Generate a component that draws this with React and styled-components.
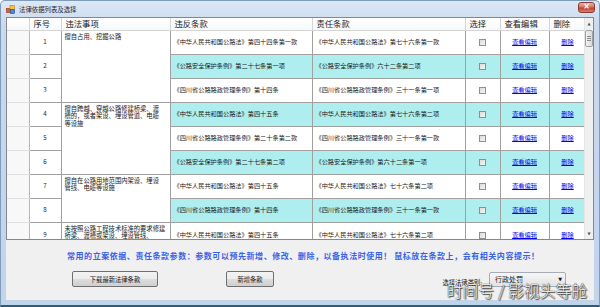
import React from "react";
import styled, { createGlobalStyle, css } from "styled-components";

const GlobalStyle = createGlobalStyle`
  html, body {
    margin: 0;
    padding: 0;
    width: 600px;
    height: 307px;
    overflow: hidden;
    background: #ffffff;
  }
  * { box-sizing: border-box; }
`;

const cjk = `"Noto Sans CJK SC", "Noto Sans", sans-serif`;

const Window = styled.div`
  width: 600px;
  height: 307px;
  display: flex;
  flex-direction: column;
  padding: 0 5px 5px 5px;
  background: linear-gradient(180deg, #dde8f5 0%, #c9d9ee 8%, #c2d4ea 100%);
  border: 1px solid #7f9db9;
  border-bottom: 2px solid #2b5d78;
  border-radius: 5px 5px 0 0;
  font-family: ${cjk};
`;

const TitleBar = styled.div`
  height: 16px;
  display: flex;
  align-items: center;
  gap: 4px;
`;

const TitleText = styled.span`
  font-size: 6.4px;
  color: #1e2a3a;
  flex: 1;
`;

const CloseButton = styled.div`
  width: 17px;
  height: 11px;
  margin-right: -1px;
  margin-top: -4px;
  border: 1px solid #8a3c34;
  border-radius: 3px;
  background: linear-gradient(180deg, #eab1a6 0%, #d87564 45%, #c2402f 55%, #d7806c 100%);
  color: #ffffff;
  font-size: 8px;
  font-weight: bold;
  font-family: "DejaVu Sans", sans-serif;
  display: flex;
  align-items: center;
  justify-content: center;
  line-height: 1;
`;

const Client = styled.div`
  flex: 1;
  display: flex;
  flex-direction: column;
  background: #f0f0f0;
`;

const GridBox = styled.div`
  height: 223px;
  display: flex;
  border: 1px solid #828790;
  background: #ffffff;
  overflow: hidden;
`;

const Viewport = styled.div`
  flex: 1;
  overflow: hidden;
`;

const Table = styled.table`
  table-layout: fixed;
  border-collapse: collapse;
  width: 579px;
  font-family: ${cjk};
  color: #1a1a1a;
`;

const HeadCell = styled.th`
  height: 12px;
  padding: 0 0 0 4px;
  font-size: 8.3px;
  font-weight: normal;
  text-align: left;
  line-height: 11px;
  white-space: nowrap;
  overflow: hidden;
  background: linear-gradient(180deg, #ffffff 0%, #f7f8fa 100%);
  border-right: 1px solid #d5d5d5;
  border-bottom: 1px solid #d5d5d5;
`;

const RowHead = styled.td`
  background: #f8f8f8;
  border-right: 1px solid #b8b8b8;
  border-bottom: 1px solid #e0e0e0;
  padding: 0;
`;

const Cell = styled.td`
  height: 24px;
  padding: 0 0 0 3px;
  font-size: 6.2px;
  line-height: 8px;
  white-space: nowrap;
  overflow: hidden;
  vertical-align: middle;
  border: 1px solid #a0a0a0;
  border-top: none;
  background: ${({ $alt }) => ($alt ? "#afeeee" : "#ffffff")};
  text-align: ${({ $center }) => ($center ? "center" : "left")};
  ${({ $center }) =>
    $center &&
    css`
      padding: 0;
    `}
`;

const GroupCell = styled.td`
  padding: 2px 0 0 3px;
  font-size: 6.3px;
  line-height: 7.8px;
  white-space: pre;
  vertical-align: top;
  overflow: hidden;
  border: 1px solid #a0a0a0;
  border-top: none;
  background: #ffffff;
`;

const CheckBox = styled.span`
  display: inline-block;
  width: 7px;
  height: 7px;
  vertical-align: middle;
  border: 1px solid #8e8f8f;
  background: linear-gradient(135deg, #dcdcdc 0%, #f4f4f4 100%);
`;

const LinkText = styled.span`
  color: #0000ee;
  text-decoration: underline;
  font-size: 6.2px;
`;

const ScrollBar = styled.div`
  width: 9px;
  display: flex;
  flex-direction: column;
  background: #f0f0f0;
  border-left: 1px solid #e4e4e4;
`;

const Arrow = styled.div`
  height: 11px;
  display: flex;
  align-items: center;
  justify-content: center;
  font-size: 4px;
  color: #505050;
  font-family: "DejaVu Sans", sans-serif;
`;

const Thumb = styled.div`
  height: 17px;
  margin-top: 1px;
  border: 1px solid #a0a0a0;
  border-radius: 2px;
  background: linear-gradient(90deg, #f2f2f2, #dadada);
  display: flex;
  flex-direction: column;
  align-items: center;
  justify-content: center;
  gap: 1px;
  span {
    width: 4px;
    height: 1px;
    background: #8a8a8a;
  }
`;

const Track = styled.div`
  flex: 1;
`;

const Notice = styled.div`
  margin: 11px 0 0 61px;
  font-size: 8px;
  letter-spacing: 0.55px;
  font-weight: bold;
  color: #3a62e6;
  white-space: pre;
  line-height: 10px;
`;

const Controls = styled.div`
  display: flex;
  align-items: center;
  margin-top: 10px;
  padding-left: 66px;
`;

const Button = styled.div`
  width: ${({ $w }) => $w}px;
  height: 16px;
  margin-right: ${({ $gap }) => $gap || 0}px;
  border: 1px solid #707070;
  border-radius: 2px;
  background: linear-gradient(180deg, #f3f3f3 0%, #ebebeb 50%, #dddddd 51%, #cfcfcf 100%);
  font-size: 6.3px;
  color: #1a1a1a;
  display: flex;
  align-items: center;
  justify-content: center;
`;

const Label = styled.span`
  font-size: 6.3px;
  color: #1a1a1a;
  margin: 6px 7px 0 0;
`;

const Combo = styled.div`
  width: 77px;
  height: 15px;
  margin-right: 28px;
  border: 1px solid #a5acb5;
  border-radius: 2px;
  background: linear-gradient(180deg, #f6f6f6, #e3e3e3);
  display: flex;
  align-items: center;
  padding: 0 3px 0 5px;
  font-size: 7px;
  color: #1a1a1a;
  span {
    flex: 1;
  }
  b {
    font-size: 5px;
    font-family: "DejaVu Sans", sans-serif;
    font-weight: normal;
  }
`;

const Spacer = styled.div`
  flex: 1;
`;

const Watermark = styled.div`
  position: absolute;
  left: 447px;
  top: 279px;
  font-family: ${cjk};
  font-size: 15.5px;
  font-weight: 300;
  color: #ffffff;
  letter-spacing: 0.3px;
  white-space: pre;
  text-shadow: 0 0 1px #222, 0 0 1px #222, 1px 1px 1px #333;
`;

const columns = [
  { key: "rh", w: 22, label: "" },
  { key: "n", w: 32, label: "序号" },
  { key: "item", w: 109, label: "违法事项" },
  { key: "v", w: 142, label: "违反条款" },
  { key: "r", w: 153, label: "责任条款" },
  { key: "c", w: 35, label: "选择" },
  { key: "e", w: 49, label: "查看编辑" },
  { key: "d", w: 37, label: "删除" },
];

const rows = [
  { v: "《中华人民共和国公路法》第四十四条第一款", r: "《中华人民共和国公路法》第七十六条第一款" },
  { v: "《公路安全保护条例》第二十七条第一项", r: "《公路安全保护条例》六十二条第二项" },
  { v: "《四川省公路路政管理条例》第十四条", r: "《四川省公路路政管理条例》三十一条第一项" },
  { v: "《中华人民共和国公路法》第四十五条", r: "《中华人民共和国公路法》第七十六条第二项" },
  { v: "《四川省公路路政管理条例》第二十条第二款", r: "《四川省公路路政管理条例》三十一条第一款" },
  { v: "《公路安全保护条例》第二十七条第二项", r: "《公路安全保护条例》第六十二条第一项" },
  { v: "《中华人民共和国公路法》第四十五条", r: "《中华人民共和国公路法》七十六条第二项" },
  { v: "《四川省公路路政管理条例》第十四条", r: "《四川省公路路政管理条例》三十一条第一款" },
  { v: "《中华人民共和国公路法》第四十五条", r: "《中华人民共和国公路法》七十六条第二项" },
];

const groups = {
  0: { span: 3, text: "擅自占用、挖掘公路" },
  3: { span: 3, text: "擅自跨越、穿越公路修建桥梁、渡\n槽的，或者架设、埋设管道、电缆\n等设施" },
  6: { span: 2, text: "擅自在公路用地范围内架设、埋设\n管线、电缆等设施" },
  8: { span: 1, text: "未按照公路工程技术标准的要求修建\n桥梁、渡槽或架设、埋设管线、\n电缆等设施" },
};

const AppIcon = () => (
  <svg width="9" height="9" viewBox="0 0 9 9">
    <rect x="0.5" y="3.5" width="4" height="4" fill="#e2572b" stroke="#9b3315" strokeWidth="0.6" />
    <rect x="4" y="0.5" width="4.5" height="4" fill="#f5c342" stroke="#b78512" strokeWidth="0.6" />
    <rect x="4.5" y="4.5" width="4" height="4" fill="#4d86d8" stroke="#1f4f99" strokeWidth="0.6" />
  </svg>
);

export default function App() {
  return (
    <>
      <GlobalStyle />
      <Window>
        <TitleBar>
          <AppIcon />
          <TitleText>法律依据列表及选择</TitleText>
          <CloseButton>×</CloseButton>
        </TitleBar>
        <Client>
          <GridBox>
            <Viewport>
              <Table>
                <colgroup>
                  {columns.map((c) => (
                    <col key={c.key} style={{ width: c.w }} />
                  ))}
                </colgroup>
                <thead>
                  <tr>
                    {columns.map((c) => (
                      <HeadCell key={c.key}>{c.label}</HeadCell>
                    ))}
                  </tr>
                </thead>
                <tbody>
                  {rows.map((row, i) => {
                    const alt = i % 2 === 1;
                    const group = groups[i];
                    return (
                      <tr key={i}>
                        <RowHead />
                        <Cell $center>{i + 1}</Cell>
                        {group && <GroupCell rowSpan={group.span}>{group.text}</GroupCell>}
                        <Cell $alt={alt}>{row.v}</Cell>
                        <Cell $alt={alt}>{row.r}</Cell>
                        <Cell $alt={alt} $center>
                          <CheckBox />
                        </Cell>
                        <Cell $alt={alt} $center>
                          <LinkText>查看编辑</LinkText>
                        </Cell>
                        <Cell $alt={alt} $center>
                          <LinkText>删除</LinkText>
                        </Cell>
                      </tr>
                    );
                  })}
                </tbody>
              </Table>
            </Viewport>
            <ScrollBar>
              <Arrow>▲</Arrow>
              <Thumb>
                <span />
                <span />
                <span />
              </Thumb>
              <Track />
              <Arrow>▼</Arrow>
            </ScrollBar>
          </GridBox>
          <Notice>
            {"常用的立案依据、责任条款参数：参数可以预先新增、修改、删除，以备执法时使用！ 鼠标放在条款上，会有相关内容提示！"}
          </Notice>
          <Controls>
            <Button $w={86} $gap={68}>下载最新法律条款</Button>
            <Button $w={48}>新增条款</Button>
            <Spacer />
            <Label>选择法律类别:</Label>
            <Combo>
              <span>行政处罚</span>
              <b>▼</b>
            </Combo>
          </Controls>
        </Client>
      </Window>
      <Watermark>时间号 / 影视头等舱</Watermark>
    </>
  );
}
